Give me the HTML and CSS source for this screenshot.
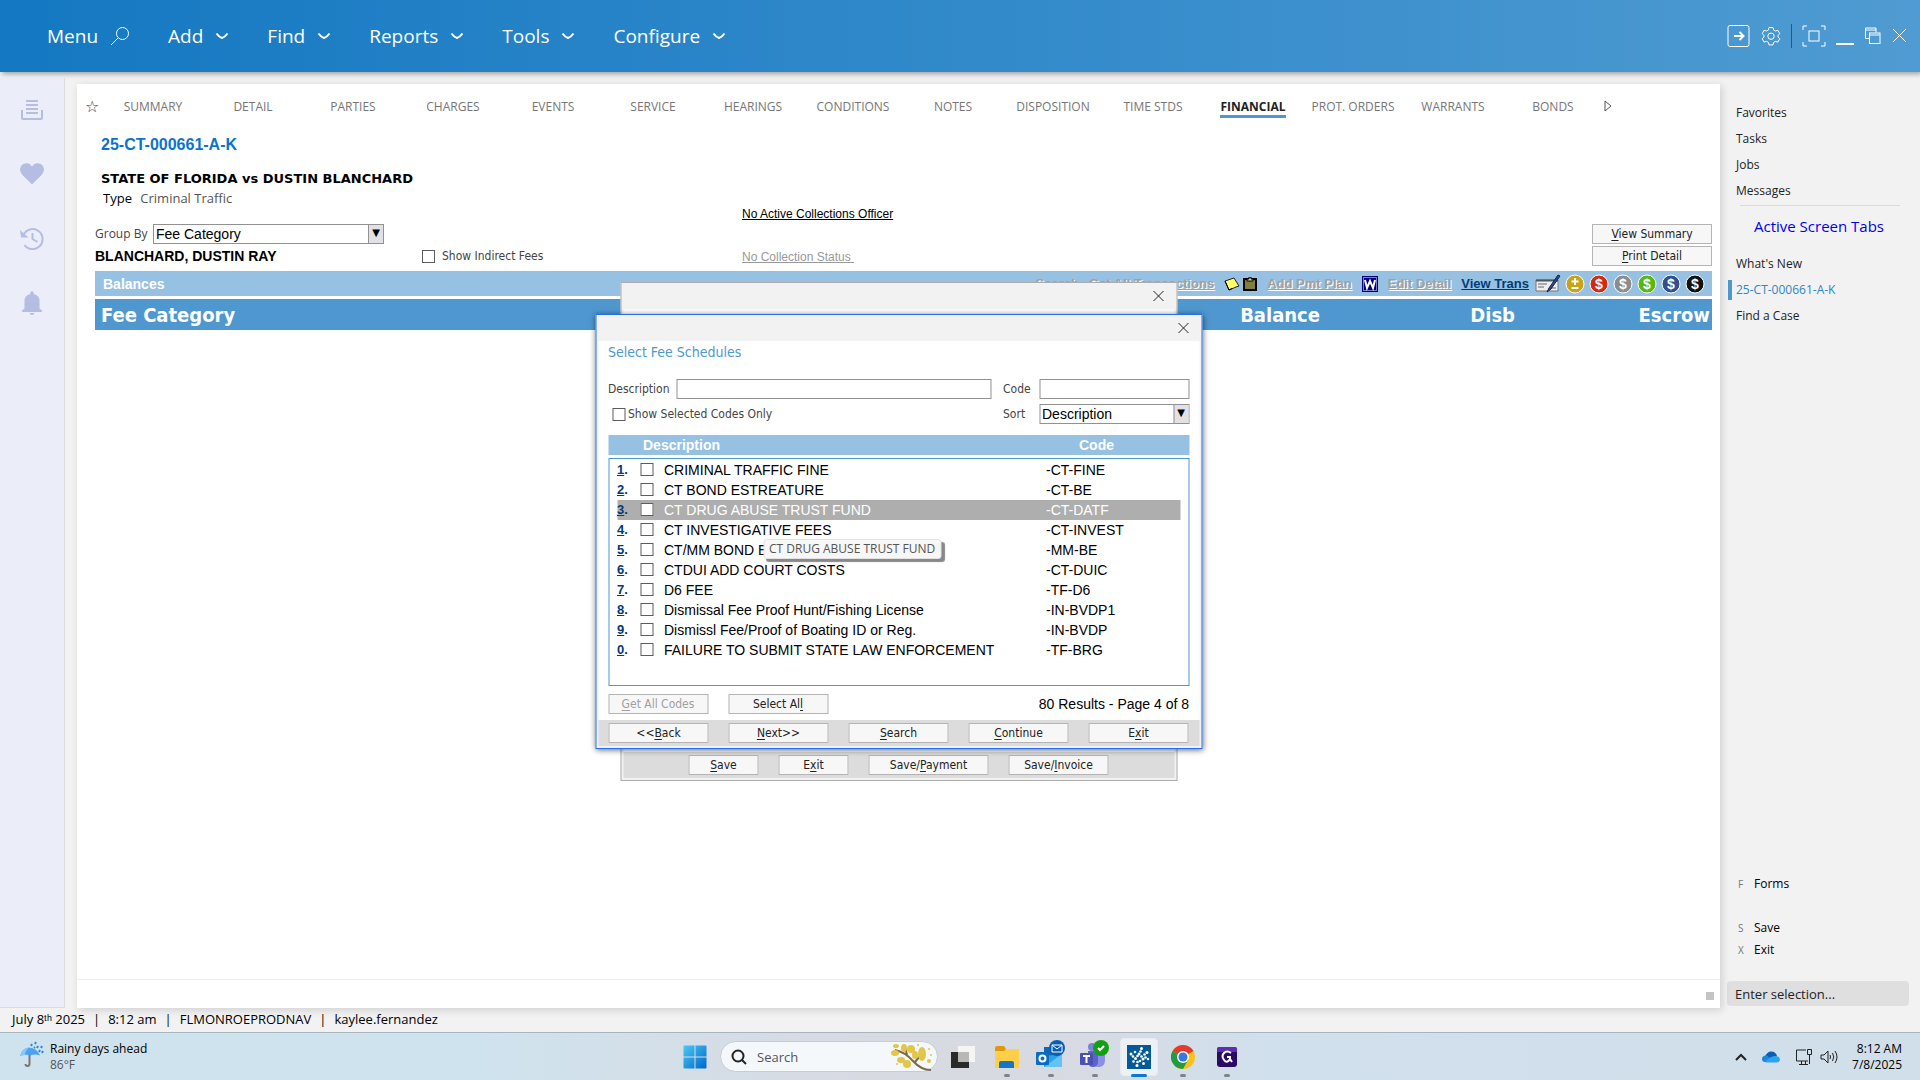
FILE: index.html
```html
<!DOCTYPE html>
<html lang="en">
<head>
    <meta charset="UTF-8">
    <meta name="viewport" content="width=device-width, initial-scale=1.0">
    <title>25-CT-000661-A-K - Financial</title>
    <link rel="stylesheet" href="styles.css">
</head>
<body>
    <header class="topbar">
        <nav class="menu">
            <a href="#">Menu <svg class="search-icon" width="20" height="20" viewBox="0 0 20 20"><circle cx="12.500" cy="7.500" r="6"/><path d="M8 12l-7 7"/></svg></a>
            <a href="#">Add <svg width="14" height="8" viewBox="0 0 14 8"><path class="thick" d="M1.500 1.500Q4 5 7 6Q10 5 12.500 1.500"/></svg></a>
            <a href="#">Find <svg width="14" height="8" viewBox="0 0 14 8"><path class="thick" d="M1.500 1.500Q4 5 7 6Q10 5 12.500 1.500"/></svg></a>
            <a href="#">Reports <svg width="14" height="8" viewBox="0 0 14 8"><path class="thick" d="M1.500 1.500Q4 5 7 6Q10 5 12.500 1.500"/></svg></a>
            <a href="#">Tools <svg width="14" height="8" viewBox="0 0 14 8"><path class="thick" d="M1.500 1.500Q4 5 7 6Q10 5 12.500 1.500"/></svg></a>
            <a href="#">Configure <svg width="14" height="8" viewBox="0 0 14 8"><path class="thick" d="M1.500 1.500Q4 5 7 6Q10 5 12.500 1.500"/></svg></a>
        </nav>
        <div class="window-tools">
            <button aria-label="Sign out"><svg width="24" height="24" viewBox="0 0 24 24"><rect x="1" y="1.500" width="21" height="21" rx="2"/><path class="thick" d="M7 12h9M12.500 8l4 4l-4 4"/></svg></button>
            <button aria-label="Settings"><svg width="20" height="20" viewBox="0 0 20 20"><path d="M8 1.500h4l.6 2.500 1.800 1 2.500-.7 1.900 3.400-1.800 1.700v1.600l1.800 1.700-1.900 3.400-2.500-.7-1.800 1-.6 2.500H8l-.6-2.500-1.800-1-2.500.7-1.900-3.400L3 11V9.400L1.200 7.700l1.900-3.400 2.500.7 1.800-1z"/><circle cx="10" cy="10.200" r="3.200"/></svg></button>
            <span class="divider"></span>
            <button aria-label="Full screen"><svg width="24" height="22" viewBox="0 0 24 22"><path d="M1 5V1h4M19 1h4v4M23 17v4h-4M5 21H1v-4"/><rect x="7" y="6" width="10" height="10"/></svg></button>
            <button aria-label="Minimize"><svg width="18" height="20" viewBox="0 0 18 20"><path class="thick" d="M0 18h18"/></svg></button>
            <button aria-label="Restore"><svg width="18" height="18" viewBox="0 0 18 18"><path d="M5 11.500H1.500V1h10.500v4.500M1.500 3H12"/><rect x="5.500" y="6" width="10.500" height="10.500"/><path d="M5.500 8h10"/></svg></button>
            <button aria-label="Close"><svg width="16" height="16" viewBox="0 0 16 16"><path d="M1 1l13 13M14 1L1 14"/></svg></button>
        </div>
    </header>

    <div class="workspace">
        <aside class="rail">
            <a href="#" aria-label="Inbox"><svg width="24" height="24" viewBox="0 0 24 24"><path d="M6 2h12v2H6zM6 6h12v2H6zM6 10h12v2H6zM6 14h12v2H6z"/><path d="M1 12h2v8h18v-8h2v8q0 2-2 2H3q-2 0-2-2z"/></svg></a>
            <a href="#" aria-label="Favorites"><svg width="24" height="24" viewBox="0 0 24 24"><path d="M12 22.500L2.500 13Q0 10 0 7.500Q.5 1.500 6.500 1.200Q10 1.300 12 4.500Q14 1.300 17.500 1.200Q23.500 1.500 24 7.500Q24 10 21.500 13z"/></svg></a>
            <a href="#" aria-label="History"><svg width="24" height="24" viewBox="0 0 24 24"><path class="line" d="M4 8A10 10 0 1 1 4.500 19M12.500 7v6l5 3"/><path d="M0 4l1 7.500h7.500z"/></svg></a>
            <a href="#" aria-label="Alerts"><svg width="24" height="26" viewBox="0 0 24 26"><path d="M12 1q1.600.2 1.800 3Q19.500 5.500 19.500 11v7.500l2.500 2V22H2v-1.500l2.500-2V11Q4.500 5.500 10.200 4Q10.400 1.200 12 1zM9.500 23h5q-.6 2-2.500 2t-2.500-2z"/></svg></a>
        </aside>

        <main class="panel">
            <nav class="tabs">
                <span class="star">☆</span>
                <a href="#">SUMMARY</a>
                <a href="#">DETAIL</a>
                <a href="#">PARTIES</a>
                <a href="#">CHARGES</a>
                <a href="#">EVENTS</a>
                <a href="#">SERVICE</a>
                <a href="#">HEARINGS</a>
                <a href="#">CONDITIONS</a>
                <a href="#">NOTES</a>
                <a href="#">DISPOSITION</a>
                <a href="#">TIME STDS</a>
                <a href="#" class="active"><span>FINANCIAL</span></a>
                <a href="#">PROT. ORDERS</a>
                <a href="#">WARRANTS</a>
                <a href="#">BONDS</a>
                <svg width="10" height="12" viewBox="0 0 10 12"><path d="M2 1l6 5l-6 5z"/></svg>
            </nav>

            <div class="case">
                <h1>25-CT-000661-A-K</h1>
                <h2>STATE OF FLORIDA vs DUSTIN BLANCHARD</h2>
                <p>Type <span>Criminal Traffic</span></p>
            </div>

            <div class="filters">
                <div class="filter-left">
                    <div class="group-by">
                        <label for="group">Group By</label>
                        <span class="select wide"><select id="group"><option>Fee Category</option></select></span>
                    </div>
                    <div class="party">
                        <strong>BLANCHARD, DUSTIN RAY</strong>
                        <label><input type="checkbox"> Show Indirect Fees</label>
                    </div>
                </div>
                <div class="collections">
                    <a href="#">No Active Collections Officer</a>
                    <a href="#" class="disabled">No Collection Status&nbsp;</a>
                </div>
                <div class="filter-buttons">
                    <button class="btn"><u>V</u>iew Summary</button>
                    <button class="btn"><u>P</u>rint Detail</button>
                </div>
            </div>

            <div class="balances">
                <strong>Balances</strong>
                <div class="balance-links">
                    <a href="#" class="off">Search</a>
                    <a href="#" class="off">Get All Transactions</a>
                    <span class="icon-pair">
                        <svg width="16" height="14" viewBox="0 0 16 14"><path d="M1 4l9-3 5 8-3 1-7 3z" fill="#ffff66" stroke="#222"/><path d="M1 4l4 9 3-1.500" fill="none" stroke="#000"/></svg>
                        <svg width="14" height="14" viewBox="0 0 14 14"><rect x="1" y="2" width="12" height="11" fill="#80803a" stroke="#000" stroke-width="2"/><path d="M4 4V2h2V0h2v2h2v2z" fill="#d8d890" stroke="#000"/></svg>
                    </span>
                    <a href="#" class="off">Add Pmt Plan</a>
                    <svg width="16" height="16" viewBox="0 0 16 16"><path fill="#000080" d="M0 0h16v16H0z"/><path d="M1.500 1.500h13v13h-13z" fill="none" stroke="#fff" stroke-dasharray="1 1"/><path d="M3 4l2 8 3-7 3 7 2-8" fill="none" stroke="#fff" stroke-width="2"/></svg>
                    <a href="#" class="off">Edit Detail</a>
                    <a href="#">View Trans</a>
                    <span class="coins">
                        <svg width="26" height="20" viewBox="0 0 26 20"><path d="M1 6h22v11H1z" fill="#eee" stroke="#777"/><path d="M1 6.500h22" stroke="#555" stroke-width="2"/><path d="M3 10h9M3 13h6M16 14h5" stroke="#666"/><path d="M23 1L14 14l-2 4 4-3L25 2z" fill="#28488c" stroke="#14264f"/></svg>
                        <svg class="coin gold" width="20" height="20" viewBox="0 0 20 20"><circle cx="10" cy="10" r="9"/><path d="M10 4v7M6.500 7.500h7M6.500 14h7" fill="none" stroke="#fff" stroke-width="2"/></svg>
                        <svg class="coin red" width="20" height="20" viewBox="0 0 20 20"><circle cx="10" cy="10" r="9"/><text x="10" y="15">$</text></svg>
                        <svg class="coin grey" width="20" height="20" viewBox="0 0 20 20"><circle cx="10" cy="10" r="9"/><text x="10" y="15">$</text></svg>
                        <svg class="coin green" width="20" height="20" viewBox="0 0 20 20"><circle cx="10" cy="10" r="9"/><text x="10" y="15">$</text></svg>
                        <svg class="coin blue" width="20" height="20" viewBox="0 0 20 20"><circle cx="10" cy="10" r="9"/><text x="10" y="15">$</text></svg>
                        <svg class="coin black" width="20" height="20" viewBox="0 0 20 20"><circle cx="10" cy="10" r="9"/><text x="10" y="15">$</text></svg>
                    </span>
                </div>
            </div>
            <table class="fees">
                <thead>
                    <tr><th>Fee Category</th><th class="num">Balance</th><th class="num">Disb</th><th class="num">Escrow</th></tr>
                </thead>
            </table>

            <div class="panel-foot"><span></span></div>

            <!-- parent dialog, mostly covered by the picker -->
            <div class="dialog dialog-back">
                <div class="dialog-title"><button class="close" aria-label="Close"><svg width="12" height="12" viewBox="0 0 12 12"><path d="M1 1l10 10M11 1L1 11"/></svg></button></div>
                <div class="dialog-body"></div>
                <div class="dialog-foot">
                    <button class="btn small"><u>S</u>ave</button>
                    <button class="btn small">E<u>x</u>it</button>
                    <button class="btn large">Save/<u>P</u>ayment</button>
                    <button class="btn">Save/<u>I</u>nvoice</button>
                </div>
            </div>

            <div class="dialog dialog-front">
                <div class="dialog-title"><button class="close" aria-label="Close"><svg width="12" height="12" viewBox="0 0 12 12"><path d="M1 1l10 10M11 1L1 11"/></svg></button></div>
                <div class="dialog-body">
                    <h3>Select Fee Schedules</h3>
                    <div class="form">
                        <label for="desc">Description</label>
                        <input type="text" id="desc">
                        <label for="code">Code</label>
                        <input type="text" id="code">
                        <label class="only"><input type="checkbox"> Show Selected Codes Only</label>
                        <label for="sort">Sort</label>
                        <span class="select"><select id="sort"><option>Description</option></select></span>
                    </div>
                    <table class="codes">
                        <thead>
                            <tr><th></th><th>Description</th><th>Code</th></tr>
                        </thead>
                        <tbody>
                            <tr><td><a href="#">1</a>.</td><td><input type="checkbox" aria-label="Row 1"></td><td>CRIMINAL TRAFFIC FINE</td><td>-CT-FINE</td></tr>
                            <tr><td><a href="#">2</a>.</td><td><input type="checkbox" aria-label="Row 2"></td><td>CT BOND ESTREATURE</td><td>-CT-BE</td></tr>
                            <tr class="selected"><td><a href="#">3</a>.</td><td><input type="checkbox" aria-label="Row 3"></td><td>CT DRUG ABUSE TRUST FUND<span class="tip">CT DRUG ABUSE TRUST FUND</span></td><td>-CT-DATF</td></tr>
                            <tr><td><a href="#">4</a>.</td><td><input type="checkbox" aria-label="Row 4"></td><td>CT INVESTIGATIVE FEES</td><td>-CT-INVEST</td></tr>
                            <tr><td><a href="#">5</a>.</td><td><input type="checkbox" aria-label="Row 5"></td><td>CT/MM BOND ESTREATURE</td><td>-MM-BE</td></tr>
                            <tr><td><a href="#">6</a>.</td><td><input type="checkbox" aria-label="Row 6"></td><td>CTDUI ADD COURT COSTS</td><td>-CT-DUIC</td></tr>
                            <tr><td><a href="#">7</a>.</td><td><input type="checkbox" aria-label="Row 7"></td><td>D6 FEE</td><td>-TF-D6</td></tr>
                            <tr><td><a href="#">8</a>.</td><td><input type="checkbox" aria-label="Row 8"></td><td>Dismissal Fee Proof Hunt/Fishing License</td><td>-IN-BVDP1</td></tr>
                            <tr><td><a href="#">9</a>.</td><td><input type="checkbox" aria-label="Row 9"></td><td>Dismissl Fee/Proof of Boating ID or Reg.</td><td>-IN-BVDP</td></tr>
                            <tr><td><a href="#">0</a>.</td><td><input type="checkbox" aria-label="Row 10"></td><td>FAILURE TO SUBMIT STATE LAW ENFORCEMENT</td><td>-TF-BRG</td></tr>
                        </tbody>
                    </table>
                    <div class="results">
                        <button class="btn" disabled><u>G</u>et All Codes</button>
                        <button class="btn">Select Al<u>l</u></button>
                        <span>80 Results - Page 4 of 8</span>
                    </div>
                </div>
                <div class="dialog-foot">
                    <button class="btn">&lt;&lt;<u>B</u>ack</button>
                    <button class="btn"><u>N</u>ext&gt;&gt;</button>
                    <button class="btn"><u>S</u>earch</button>
                    <button class="btn"><u>C</u>ontinue</button>
                    <button class="btn">E<u>x</u>it</button>
                </div>
            </div>
        </main>

        <aside class="sidebar">
            <nav class="side-links">
                <a href="#">Favorites</a>
                <a href="#">Tasks</a>
                <a href="#">Jobs</a>
                <a href="#">Messages</a>
            </nav>
            <h2>Active Screen Tabs</h2>
            <nav class="side-links">
                <a href="#">What's New</a>
                <a href="#" class="current">25-CT-000661-A-K</a>
                <a href="#">Find a Case</a>
            </nav>
            <nav class="actions">
                <a href="#" class="forms"><kbd>F</kbd>Forms</a>
                <a href="#"><kbd>S</kbd>Save</a>
                <a href="#"><kbd>X</kbd>Exit</a>
            </nav>
            <input type="text" class="selection" placeholder="Enter selection..." aria-label="Enter selection">
        </aside>
    </div>

    <footer class="status">
        <span>July 8ᵗʰ 2025</span><span>8:12 am</span><span>FLMONROEPRODNAV</span><span>kaylee.fernandez</span>
    </footer>

    <div class="taskbar">
        <div class="weather">
            <svg width="24" height="26" viewBox="0 0 24 26"><path d="M0 15Q2 7 9 6.500Q17 7 20 14.500Q15 12.500 10 14.500Q5 13 0 15z" fill="#4aa3f0"/><path d="M0 15Q2 7 9 6.500Q5 10 5 14z" fill="#8ac6fa"/><path d="M9.500 14v9q0 2-2 2t-2-2" fill="none" stroke="#777" stroke-width="2"/><path d="M12 3l-1 2M16 1l-1 2M18 5l-1 2M22 5l-1 2M20 9l-1 2M23 10l-1 2M15 6l-1 1" stroke="#2e86e0" stroke-width="2"/></svg>
            <div>Rainy days ahead<small>86°F</small></div>
        </div>
        <div class="apps">
            <button class="app" aria-label="Start"><svg width="24" height="24" viewBox="0 0 24 24"><defs><linearGradient id="win" x1="0" y1="0" x2="1" y2="1"><stop offset="0" stop-color="#4cc8f5"/><stop offset="1" stop-color="#0067c8"/></linearGradient></defs><path fill="url(#win)" d="M1.500.500h10v11h-11v-10q0-1 1-1zM12.500.500h10q1 0 1 1v10h-11zM.5 12.500h11v11h-10q-1 0-1-1zM12.500 12.500h11v10q0 1-1 1h-10z"/></svg></button>
            <label class="search">
                <svg width="16" height="16" viewBox="0 0 16 16"><circle cx="7" cy="7" r="5.500"/><path d="M11 11l4 4"/></svg>
                <input type="text" placeholder="Search" aria-label="Search">
                <svg class="sprig" width="42" height="28" viewBox="0 0 42 28"><path d="M4 7Q14 9 22 18T40 27M16 12l-2-8M24 19l5-6" fill="none" stroke="#7d6a4a" stroke-width="2"/><g fill="#e2c64a"><ellipse cx="13" cy="5" rx="3" ry="4"/><ellipse cx="4" cy="10" rx="4" ry="3"/><ellipse cx="20" cy="6" rx="4" ry="4"/><ellipse cx="31" cy="11" rx="4" ry="7"/><ellipse cx="24" cy="12" rx="3" ry="4"/><ellipse cx="10" cy="17" rx="4" ry="3"/><ellipse cx="16" cy="21" rx="4" ry="4"/><ellipse cx="5" cy="3" rx="3" ry="2"/><circle cx="38" cy="6" r="1"/><circle cx="40" cy="12" r="1"/><circle cx="38" cy="18" r="2"/><circle cx="27" cy="2" r="1"/><circle cx="6" cy="21" r="1"/></g></svg>
            </label>
            <button class="app" aria-label="Task view"><svg width="24" height="24" viewBox="0 0 24 24"><path fill="#2a2a2a" d="M0 7h18v16H0z"/><path fill="#f5f5f5" d="M7 1h17v16H7z"/><path fill="#b8b8b8" d="M7 7h11v10H7z"/></svg></button>
            <button class="app open" aria-label="File Explorer"><svg width="24" height="24" viewBox="0 0 24 24"><path fill="#e0980c" d="M0 3q0-2 2-2h7l2 3v4H0z"/><path fill="#ffcf48" d="M0 6h9l2-2h13v19H0z"/><path fill="#1476c8" d="M4 23v-5q0-2 2-2h11q2 0 2 2v5z"/></svg></button>
            <button class="app open" aria-label="Outlook"><svg class="badged" width="30" height="30" viewBox="0 0 30 30"><path fill="#1266b4" d="M8 8h10v12H8z"/><path fill="#2f9fe6" d="M8 17l18-2v13H8z"/><path fill="#63c3f5" d="M8 28l18-13v13z"/><rect y="13" width="13" height="13" rx="1" fill="#0a6cc4"/><circle cx="6.500" cy="19.500" r="3" fill="none" stroke="#fff" stroke-width="2"/><circle cx="21" cy="9" r="8" fill="#075fb3"/><path d="M16 6h10v7H16zM16 6l5 4 5-4" fill="none" stroke="#fff"/></svg></button>
            <button class="app open" aria-label="Teams"><svg class="badged" width="30" height="30" viewBox="0 0 30 30"><path fill="#8a90e8" d="M13 13h12v8q0 7-6 7t-6-6z"/><path fill="#5b62c8" d="M8 12h10v10q0 6-5 6t-5-6z"/><circle cx="12" cy="8" r="4" fill="#7a82e0"/><rect y="14" width="13" height="12" rx="1" fill="#4a50b4"/><path d="M3 17h7M6.500 17v7" stroke="#fff" stroke-width="2"/><circle cx="21" cy="9" r="8" fill="#14a014"/><path d="M18 9l2 2 4-4" fill="none" stroke="#fff" stroke-width="2"/></svg></button>
            <button class="app open current" aria-label="Court records"><svg width="24" height="24" viewBox="0 0 24 24"><path fill="#045a96" d="M0 0h24v24H0z"/><g fill="#fff"><circle cx="14.500" cy="3.500" r="1.500"/><circle cx="13.500" cy="6.500" r="1.300"/><circle cx="12" cy="9" r="1.500"/><circle cx="8" cy="7" r="1.300"/><circle cx="4" cy="9" r="1.500"/><circle cx="6" cy="11.500" r="1.300"/><circle cx="8.500" cy="13.500" r="1.500"/><circle cx="6.500" cy="16.500" r="1.300"/><circle cx="10" cy="20.500" r="1.500"/><circle cx="10.500" cy="17" r="1.300"/><circle cx="13" cy="16" r="1.300"/><circle cx="16" cy="14" r="1.500"/><circle cx="16.500" cy="18.500" r="1.500"/><circle cx="18.500" cy="12.500" r="1.300"/><circle cx="21" cy="14" r="1.300"/><circle cx="20" cy="7.500" r="1.500"/><circle cx="17.500" cy="9.500" r="1.300"/><circle cx="14.500" cy="11.500" r="1.300"/><circle cx="10.500" cy="11" r="1.300"/></g></svg></button>
            <button class="app open" aria-label="Chrome"><svg width="24" height="24" viewBox="0 0 24 24"><circle cx="12" cy="12" r="12" fill="#fbc116"/><path fill="#e33b2e" d="M12 12L1.600 6A12 12 0 0 1 22.400 6z"/><path fill="#249a41" d="M12 12L1.600 6A12 12 0 0 0 12 24L17 15z"/><path fill="#e33b2e" d="M12 6h10.400L18 5z"/><circle cx="12" cy="12" r="6" fill="#fff"/><circle cx="12" cy="12" r="4.500" fill="#3478e6"/></svg></button>
            <button class="app open" aria-label="Quest"><svg width="20" height="20" viewBox="0 0 20 20"><rect width="20" height="20" rx="3" fill="#2b0a66"/><path fill="#5a2fb0" d="M2 0h16q2 0 2 2v3H0V2q0-2 2-2z"/><path d="M14 6Q10 3 7 6T7 13T13 12V10h-3M13 12l2 3" fill="none" stroke="#fff" stroke-width="2"/></svg></button>
        </div>
        <div class="tray">
            <svg width="12" height="8" viewBox="0 0 12 8"><path d="M1 7l5-5 5 5" fill="none" stroke="#222" stroke-width="2"/></svg>
            <svg width="18" height="12" viewBox="0 0 18 12"><path fill="#0a5fb4" d="M3 6Q5 0 10 0.500Q14 1 15 5L8 9z"/><path fill="#1c86dd" d="M0 8Q0 4 5 4.500L12 11H3Q0 11 0 8z"/><path fill="#2ba4ee" d="M3 11Q8 5 13 5Q18 5 18 9Q17 11.500 15 11.500H4z"/></svg>
            <svg width="18" height="18" viewBox="0 0 18 18"><path d="M11 2H1.500v11H13M4 16.500h9M6.500 13v3M10.500 13v3M12.500 1.500h4v5h-4zM14.500 7v9" fill="none" stroke="#222"/></svg>
            <svg class="speaker" width="18" height="16" viewBox="0 0 18 16"><path d="M1 6h3l4-4v12l-4-4H1zM10 6q1 2 0 4M12.500 4q2.500 4 0 8M15 2q4 6 0 12" fill="none" stroke="#222"/></svg>
            <div class="clock">8:12 AM<br>7/8/2025</div>
        </div>
    </div>
</body>
</html>
```

FILE: styles.css
```css
* {
    box-sizing: border-box;
}
body {
    margin: 0;
    height: 100vh;
    display: flex;
    flex-direction: column;
    background-color: #f2f2f2;
    color: #000;
    font-family: "Open Sans", sans-serif;
    font-size: 12px;
    overflow: hidden;
}
a {
    color: inherit;
    text-decoration: none;
}
h1, h2, h3, p {
    margin: 0;
}
button {
    font-family: inherit;
    padding: 0;
}
svg {
    flex: none;
}

/* Top menu bar */
.topbar {
    height: 72px;
    flex: none;
    display: flex;
    align-items: center;
    justify-content: space-between;
    padding: 0 12px 0 47px;
    background: linear-gradient(to right, #1478c2, #4f9bd2);
    box-shadow: 2px 2px 5px rgba(0,0,0,0.35);
    color: #fff;
    position: relative;
}
.menu {
    display: flex;
    gap: 38px;
}
.menu a {
    display: flex;
    align-items: center;
    gap: 12px;
    font-size: 19px;
    line-height: 24px;
}
.topbar svg {
    fill: none;
    stroke: #fff;
    display: block;
}
.thick {
    stroke-width: 2;
}
.window-tools {
    display: flex;
    align-items: center;
    gap: 10px;
}
.window-tools button {
    background: none;
    border: 0;
}
.divider {
    width: 1px;
    height: 24px;
    background: #1c5c8c;
}

.workspace {
    flex: 1;
    display: flex;
    min-height: 0;
}

/* Left icon rail */
.rail {
    width: 65px;
    margin-top: 6px;
    padding-top: 20px;
    background: #ebedf8;
    border-right: 1px solid #dcdce0;
    border-bottom: 1px solid #dcdce0;
    display: flex;
    flex-direction: column;
    align-items: center;
    gap: 40px;
}
.rail a {
    height: 24px;
    display: flex;
}
.rail svg {
    fill: #b6bde3;
}
.rail .line {
    fill: none;
    stroke: #b6bde3;
    stroke-width: 2;
}

/* Case panel */
.panel {
    flex: 1;
    margin: 12px 0 0 12px;
    background: #fff;
    box-shadow: 2px 2px 8px rgba(0,0,0,0.15);
    position: relative;
    display: flex;
    flex-direction: column;
}
.tabs {
    display: flex;
    align-items: center;
    height: 44px;
    padding-left: 8px;
    color: #767676;
}
.tabs a {
    width: 100px;
    text-align: center;
}
.tabs .star {
    width: 18px;
    font: 16px "DejaVu Sans", sans-serif;
    color: #444;
}
.tabs svg {
    fill: none;
    stroke: #555;
}
.tabs .active {
    color: #222;
    font-weight: bold;
}
.active span {
    border-bottom: 3px solid #4e98cf;
}
.case {
    padding: 7px 24px 0;
}
.case h1 {
    font: bold 16px/20px "Liberation Sans", sans-serif;
    color: #0a74cc;
}
.case h2 {
    font: bold 13px/18px "DejaVu Sans", sans-serif;
    margin-top: 15px;
}
.case p {
    font-size: 13px;
    line-height: 20px;
    padding-left: 2px;
}
.case p span {
    color: #555;
    margin-left: 5px;
}

.filters {
    display: flex;
    padding: 16px 8px 0 18px;
    height: 63px;
}
.filter-left {
    width: 647px;
    color: #444;
    font: 12px/20px "DejaVu Sans Condensed", "DejaVu Sans", sans-serif;
}
.group-by {
    display: flex;
    height: 22px;
}
.group-by label {
    width: 58px;
    font: 12px/20px "Open Sans", sans-serif;
}
.party {
    display: flex;
    align-items: center;
    line-height: 20px;
}
.party strong {
    width: 327px;
    font: bold 14px/20px "Liberation Sans", sans-serif;
    color: #000;
}
.party label, .only {
    display: flex;
    align-items: center;
    gap: 7px;
}
input[type="checkbox"] {
    appearance: none;
    width: 13px;
    height: 13px;
    margin: 0;
    border: 1px solid #5c5c5c;
    background: #fff;
}
.select {
    position: relative;
    display: block;
    height: 20px;
}
.select.wide {
    width: 231px;
}
.select select {
    appearance: none;
    width: 100%;
    height: 20px;
    border: 1px solid #919191;
    border-radius: 0;
    padding: 0 2px;
    background: #fff;
    color: #000;
    font: 14px/18px "Liberation Sans", sans-serif;
}
.select::after {
    content: "▼";
    position: absolute;
    top: 1px;
    right: 1px;
    width: 14px;
    height: 18px;
    border-left: 1px solid #919191;
    background: #e1e1e6;
    color: #000;
    font: 10px/16px "DejaVu Sans", sans-serif;
    text-align: center;
    pointer-events: none;
}
.collections {
    flex: 1;
    margin-top: -20px;
    display: flex;
    flex-direction: column;
    align-items: flex-start;
    gap: 23px;
    font: 12px/20px "Liberation Sans", sans-serif;
}
.collections a {
    text-decoration: underline;
}
.collections .disabled {
    color: #999;
}
.filter-buttons {
    display: flex;
    flex-direction: column;
    gap: 2px;
}
.btn {
    width: 100px;
    height: 20px;
    background: #f7f7f7;
    border: 1px solid #b4b4b4;
    color: #222;
    font: 12px/18px "DejaVu Sans Condensed", "DejaVu Sans", sans-serif;
}
.btn u {
    text-underline-offset: 2px;
}
.btn:disabled {
    color: #a0a0a0;
}
.btn.small {
    width: 70px;
}
.btn.large, .filter-buttons .btn {
    width: 120px;
}

.balances {
    display: flex;
    align-items: center;
    justify-content: space-between;
    height: 25px;
    margin: 0 8px 3px 18px;
    padding: 0 7px 0 8px;
    background: #96c1e3;
    font: bold 14px/20px "Liberation Sans", sans-serif;
    color: #fff;
}
.balance-links {
    display: flex;
    align-items: center;
    gap: 10px;
}
.balance-links a {
    color: #003c74;
    font-size: 13px;
    text-decoration: underline;
}
.balance-links .off {
    color: #a0a0a0;
    text-shadow: 1px 1px 0 #fff;
}
.icon-pair {
    display: flex;
    gap: 3px;
}
.coins {
    display: flex;
    gap: 4px;
    margin-left: -4px;
}
.coin circle {
    stroke: #fff;
}
.coin text {
    fill: #fff;
    font: bold 14px "Liberation Sans", sans-serif;
    text-anchor: middle;
}
.gold circle { fill: #c9a416; }
.red circle { fill: #d32a12; }
.grey circle { fill: #8c8c8c; }
.green circle { fill: #58b80c; }
.blue circle { fill: #34508c; }
.black circle { fill: #111; }

.fees {
    margin: 0 8px 0 18px;
    border-collapse: collapse;
    table-layout: fixed;
    background: #4e98cf;
    color: #fff;
}
.fees th {
    height: 31px;
    padding: 0 2px 0 6px;
    text-align: left;
    font: bold 20px/30px "DejaVu Sans Condensed", "DejaVu Sans", sans-serif;
}
.fees .num {
    width: 195px;
    text-align: right;
}
.panel-foot {
    margin-top: auto;
    height: 29px;
    border-top: 1px solid #eee;
    padding: 12px 6px 0;
}
.panel-foot span {
    display: block;
    width: 8px;
    height: 8px;
    margin-left: auto;
    background: #c4c4c4;
}

/* Dialogs */
.dialog {
    position: absolute;
    left: 50%;
    transform: translateX(-50%);
    display: flex;
    flex-direction: column;
    background: #f2f2f2;
}
.dialog-back {
    top: 198px;
    width: 557px;
    height: 499px;
    padding: 0 2px 2px;
    border: 1px solid #acacac;
}
.dialog-front {
    top: 230px;
    width: 607px;
    padding: 0 2px 2px;
    border: 1px solid #2670f0;
    box-shadow: 0 1px 6px rgba(0,0,0,0.6);
}
.dialog-title {
    height: 26px;
    display: flex;
    justify-content: flex-end;
    align-items: center;
    padding-right: 10px;
}
.close {
    border: 0;
    background: none;
    height: 12px;
}
.close svg {
    display: block;
    stroke: #222;
}
.dialog-body {
    flex: 1;
    background: #fff;
    padding: 0 10px;
}
.dialog h3 {
    font: 14px/22px "DejaVu Sans Condensed", "DejaVu Sans", sans-serif;
    color: #4e98cf;
}
.dialog-foot {
    display: flex;
    align-items: center;
    justify-content: center;
    gap: 20px;
    height: 26px;
    background: #dcdcdc;
}
.form {
    display: grid;
    grid-template-columns: 68px 1fr 48px 150px;
    row-gap: 5px;
    margin-top: 16px;
    color: #444;
    font: 12px/20px "DejaVu Sans Condensed", "DejaVu Sans", sans-serif;
}
.form > label:nth-of-type(2), .form > label:nth-of-type(4) {
    padding-left: 12px;
}
.form input[type="text"] {
    height: 20px;
    border: 1px solid #919191;
    background: #fff;
}
.form .only {
    grid-column: 1 / 3;
    gap: 3px;
    padding-left: 4px;
}
.codes {
    display: block;
    margin-top: 11px;
    font: 14px/20px "Liberation Sans", sans-serif;
}
.codes thead, .codes tbody {
    display: block;
}
.codes th, .codes td {
    padding: 0;
    text-align: left;
}
.codes thead {
    height: 20px;
    background: #96c1e3;
    color: #fff;
}
.codes thead tr {
    display: grid;
    grid-template-columns: 35px 1fr 110px;
}
.codes tbody {
    height: 228px;
    margin-top: 3px;
    border: 1px solid #4e98cf;
    padding: 1px 8px;
}
.codes tbody tr {
    display: grid;
    grid-template-columns: 23px 24px 1fr 134px;
    height: 20px;
}
.codes td:first-child {
    font-weight: bold;
    font-size: 13px;
    color: #003c74;
}
.codes td a {
    text-decoration: underline;
}
.codes td input {
    display: block;
    margin: 3px 0;
}
.codes td:nth-child(3) {
    position: relative;
}
.selected {
    background: #aeaeae;
    color: #fff;
}
.tip {
    position: absolute;
    left: 99px;
    top: 39px;
    z-index: 2;
    padding: 0 5px;
    height: 20px;
    background: #f7f7f7;
    border: 1px solid #e2e2e2;
    border-radius: 3px;
    box-shadow: 3px 3px 1px #888;
    color: #555;
    font: 12px/18px "Open Sans", sans-serif;
    white-space: nowrap;
}
.results {
    display: flex;
    gap: 20px;
    padding: 8px 0 6px;
}
.results span {
    margin-left: auto;
    font: 14px/20px "Liberation Sans", sans-serif;
}

/* Right sidebar */
.sidebar {
    width: 200px;
    padding: 31px 11px 2px 7px;
    display: flex;
    flex-direction: column;
}
.side-links {
    display: flex;
    flex-direction: column;
    gap: 6px;
    margin: 0 10px 0 1px;
}
.side-links a {
    height: 20px;
    line-height: 20px;
    padding-left: 4px;
    border-left: 4px solid transparent;
    color: #222;
}
.side-links .current {
    color: #2f86c6;
    border-color: #4e98cf;
}
.sidebar h2 {
    margin: 4px 9px 18px 13px;
    padding: 10px 0 0 14px;
    border-top: 1px solid #dadada;
    font-size: 15px;
    font-weight: normal;
    line-height: 20px;
    color: #0000f0;
}
.actions {
    margin-top: auto;
    padding: 0 0 20px 11px;
}
.actions a {
    display: flex;
    line-height: 22px;
}
.actions .forms {
    margin-bottom: 22px;
}
.actions kbd {
    width: 16px;
    color: #777;
    font: 10px/22px "Open Sans", sans-serif;
}
.selection {
    height: 25px;
    padding: 0 8px;
    border: 0;
    border-radius: 4px;
    background: #dfdfdf;
    font: 13px "Open Sans", sans-serif;
}
.selection::placeholder {
    color: #222;
}

/* Status line */
.status {
    height: 24px;
    flex: none;
    display: flex;
    padding-left: 12px;
    font-size: 13px;
    line-height: 22px;
}
.status span + span::before {
    content: "|";
    margin: 0 8px;
}

/* Taskbar */
.taskbar {
    height: 48px;
    flex: none;
    display: grid;
    grid-template-columns: 1fr auto 1fr;
    align-items: center;
    border-top: 1px solid #a9b4bc;
    background: linear-gradient(to right, #cfe3ee 25%, #d8dae2 45%, #d8dae2 55%, #d0e0ec 66%, #d0dfea);
}
.weather {
    display: flex;
    gap: 6px;
    padding-left: 20px;
    font-size: 12px;
    line-height: 16px;
}
.weather small {
    display: block;
    font-size: 12px;
    color: #555;
}
.apps {
    display: flex;
    align-items: center;
    padding-left: 2px;
}
.app {
    position: relative;
    width: 44px;
    height: 46px;
    border: 0;
    background: none;
    display: flex;
    align-items: center;
    justify-content: center;
}
.app svg {
    position: relative;
}
.app .badged {
    margin-bottom: 6px;
}
.open::after {
    content: "";
    position: absolute;
    bottom: 3px;
    width: 6px;
    height: 3px;
    border-radius: 2px;
    background: #808488;
}
.app.current::before {
    content: "";
    position: absolute;
    inset: 4px 3px;
    border: 1px solid #e6ebf0;
    border-radius: 4px;
    background: #edf1f6;
}
.app.current::after {
    width: 16px;
    background: #0a78d4;
}
.search {
    display: flex;
    align-items: center;
    gap: 10px;
    width: 218px;
    height: 31px;
    margin: 0 3px;
    padding: 0 4px 0 10px;
    border: 1px solid #c4ccd4;
    border-radius: 16px;
    background: #f5f8fa;
}
.search svg {
    fill: none;
    stroke: #222;
    stroke-width: 2;
}
.search .sprig {
    stroke: none;
}
.search input {
    width: 100%;
    min-width: 0;
    padding: 0;
    border: 0;
    background: none;
    font: 13px "Open Sans", sans-serif;
}
.search input::placeholder {
    color: #555;
}
.tray {
    display: flex;
    align-items: center;
    justify-content: flex-end;
    padding-right: 18px;
}
.tray svg {
    margin-right: 15px;
}
.tray .speaker {
    margin: 0 14px 0 -8px;
}
.clock {
    text-align: right;
    line-height: 16px;
}
```
